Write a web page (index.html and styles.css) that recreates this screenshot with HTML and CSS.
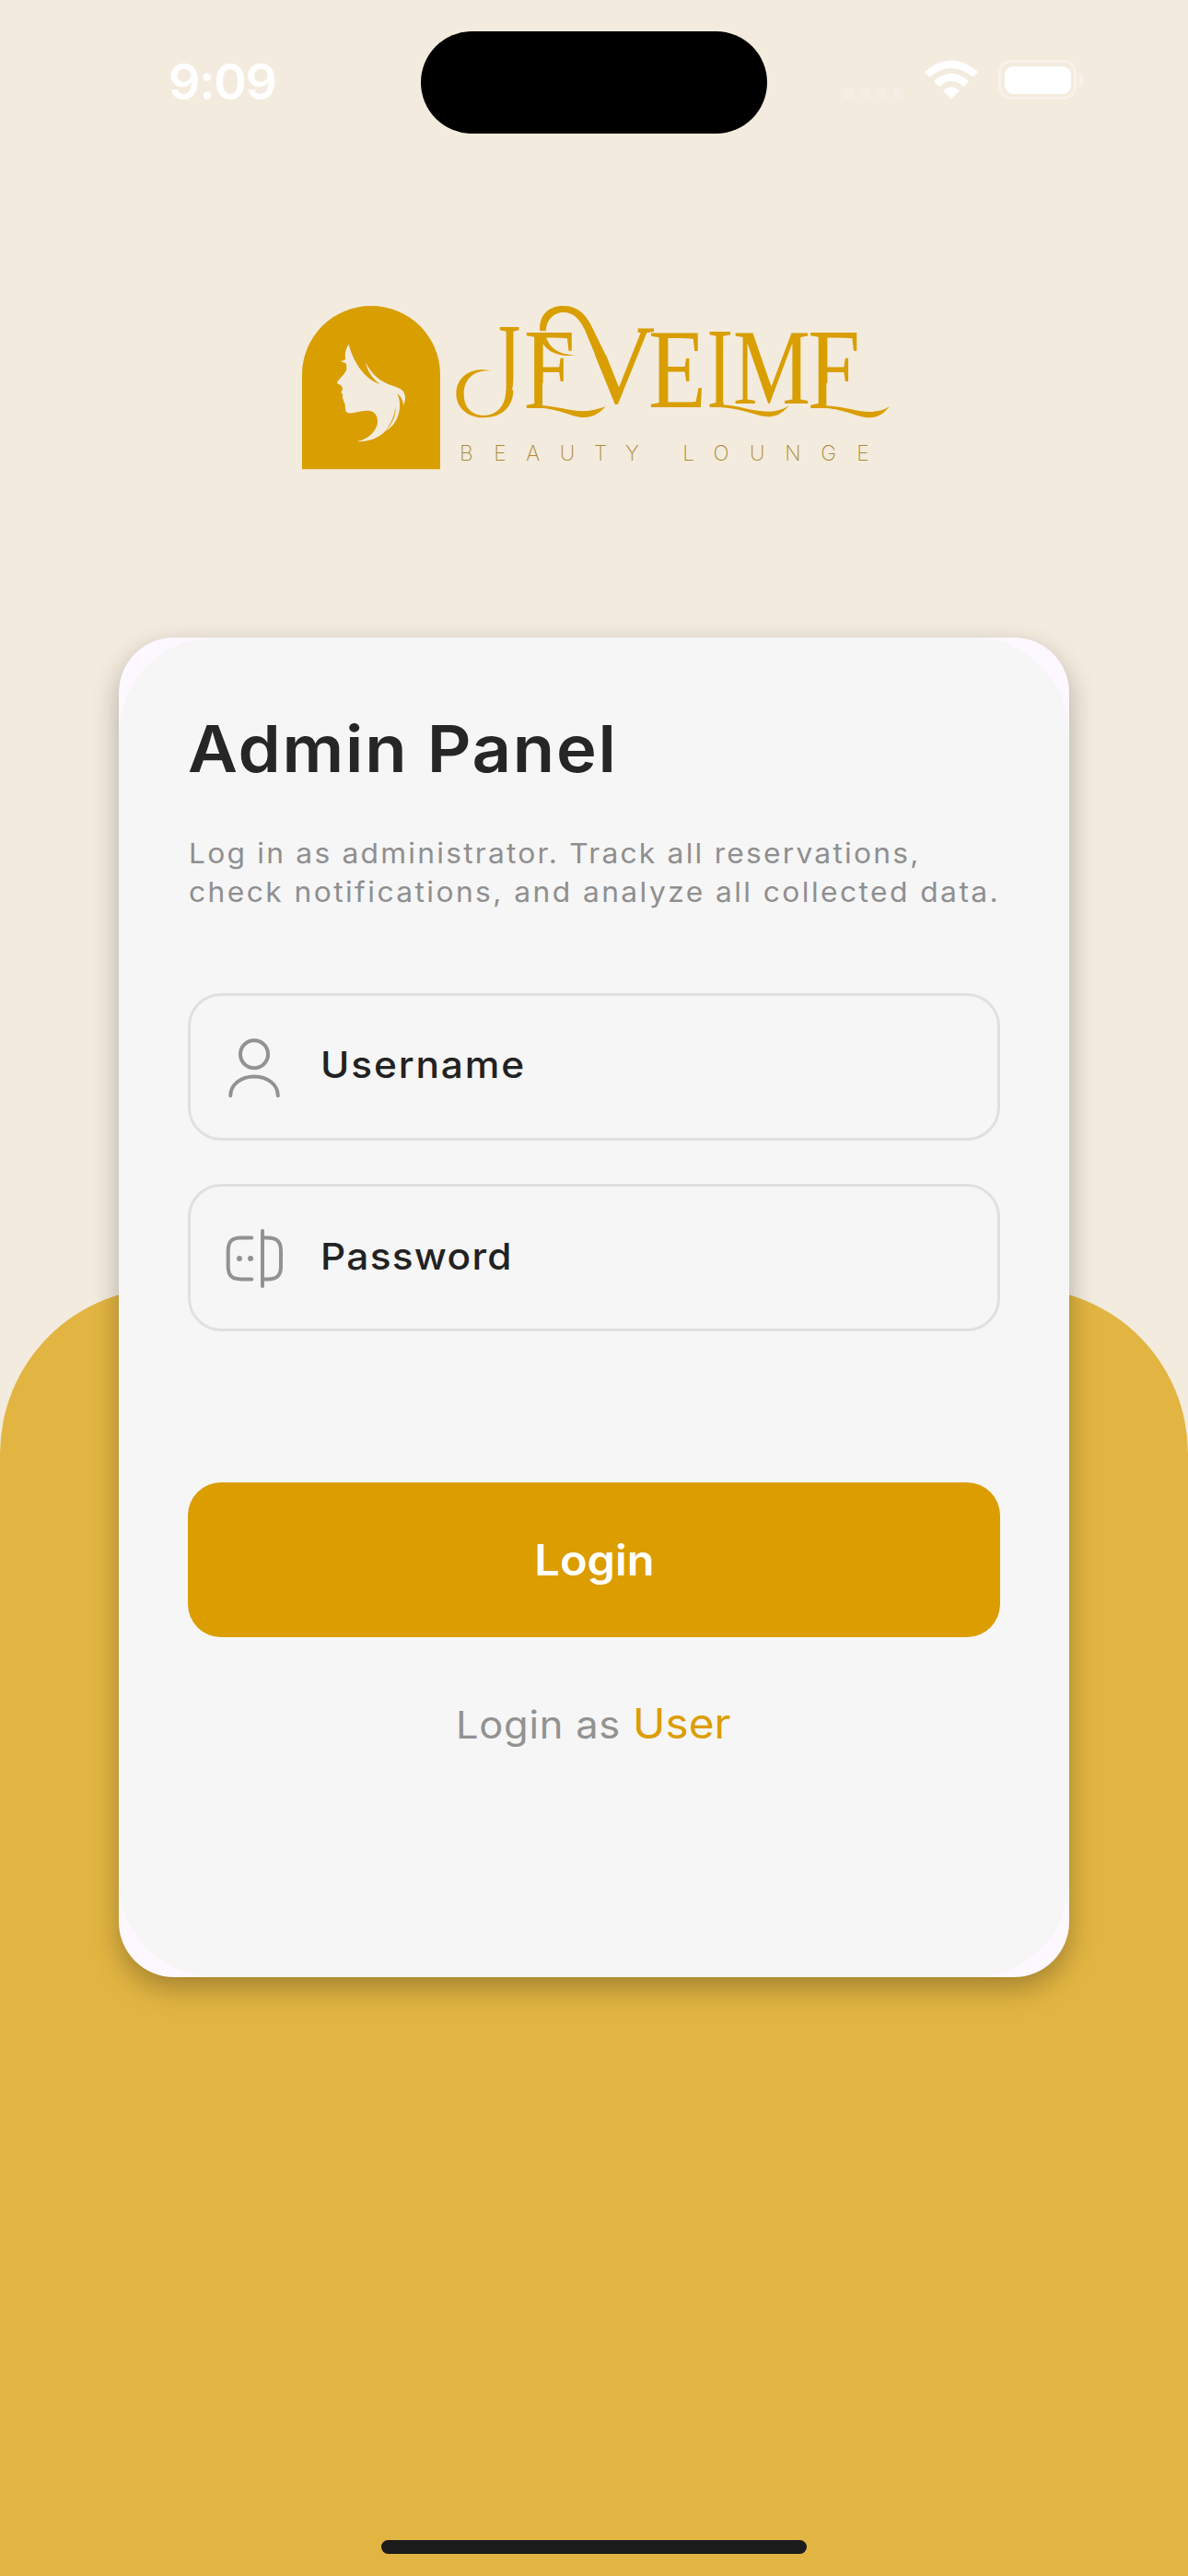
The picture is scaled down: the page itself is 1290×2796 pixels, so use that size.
FILE: index.html
```html
<!DOCTYPE html>
<html lang="en">
<head>
<meta charset="utf-8">
<title>Jevelme Beauty Lounge – Admin Panel</title>
<link rel="stylesheet" href="styles.css">
</head>
<body>
<div class="screen">
  <header class="status">
    <div class="time">9:09</div>
    <div class="island"></div>
    <div class="indicators">
      <div class="cell"><i></i><i></i><i></i><i></i></div>
      <svg class="wifi" viewBox="0 0 58 43">
        <path d="M0 13.300Q29-12.500 58 13.300L52.500 18.800Q29-1 5.500 18.800Z"/>
        <path d="M10 23.200Q29 6.500 48 23.200L42.400 29Q29 17 15.600 29Z"/>
        <path d="M20 33.500Q29 25.500 38 33.500L29 42.500Z"/>
      </svg>
      <div class="battery"><div class="charge"></div></div>
      <div class="nub"></div>
    </div>
  </header>

  <svg class="logo" viewBox="0 0 2010 660" role="img" aria-label="Jevelme Beauty Lounge">
    <defs>
      <clipPath id="clip-j"><path d="M680 100H770V200H745V341H712V200H680Z"/></clipPath>
      <clipPath id="clip-e1"><path d="M770 100H980V318H837V420H770Z"/></clipPath>
      <clipPath id="clip-v"><path d="M1148 100H1200V420H950V226H1060V162H1148Z"/></clipPath>
      <clipPath id="clip-l"><path d="M1370 100H1450V200H1427V420H1370Z"/></clipPath>
      <clipPath id="clip-e3"><path d="M1690 100H1900V318H1762V420H1690Z"/></clipPath>
    </defs>
    <g class="gold">
      <path d="M54 598V290A225 224 0 0 1 504 290V598Z"/>
      <g class="wordmark">
        <g clip-path="url(#clip-j)"><text transform="translate(670 381) scale(.66 1)">J</text></g>
        <g clip-path="url(#clip-e1)"><text transform="translate(777 398) scale(.8 1)">E</text></g>
        <g clip-path="url(#clip-v)"><text transform="translate(948 381) scale(.96 .98)">V</text></g>
        <text transform="translate(1182 395) scale(.83 .985)">E</text>
        <g clip-path="url(#clip-l)"><text transform="translate(1375 397) scale(.66 1)">L</text></g>
        <text transform="translate(1458 383) scale(.76 .935)">M</text>
        <g clip-path="url(#clip-e3)"><text transform="translate(1702 398) scale(.82 1)">E</text></g>
      </g>
      <path d="M742 340C742 395 705 430 645 430C590 430 556 395 556 352C556 300 600 262 670 277C620 272 581 300 581 352C581 395 605 423 645 423C690 423 718 390 718 340Z"/>
      <path d="M829 148C825 98 855 66 905 66C950 66 974 90 994 126L1044 228H1010L976 146C958 110 940 87 905 87C875 87 850 110 848 148Z"/>
      <path d="M831 163H848C856 200 890 228 947 226C890 236 835 212 831 163Z"/>
      <path d="M826 390C880 390 930 412 985 408C1010 404 1030 400 1043 393C1020 420 995 430 970 429C930 428 900 402 826 398Z"/>
      <path d="M1422 388C1480 390 1520 412 1580 410C1610 408 1625 400 1640 391C1615 420 1595 427 1572 427C1530 425 1490 400 1420 397Z"/>
      <path d="M1750 391C1810 391 1860 412 1910 411C1940 408 1955 402 1968 393C1945 422 1925 430 1900 430C1860 428 1820 400 1745 398Z"/>
    </g>
    <path class="face" d="M206 191C196 204 193 222 195 238C196 243 190 245 180 245C184 250 190 249 196 252C200 262 200 272 197 278C190 292 175 302 168 315C168 322 184 322 185 332C187 338 184 343 181 348C183 352 186 352 187 357C186 361 184 362 186 366C190 372 188 376 192 382C198 392 190 408 202 414C222 420 245 404 275 408C297 412 303 436 299 452C290 482 262 503 233 507C280 512 318 485 330 468C348 440 357 418 358 393C362 425 345 452 326 474C350 460 368 435 372 400C374 380 370 365 364 352C378 362 382 375 384 390C396 365 392 340 360 330C318 314 290 305 260 248C268 280 285 305 308 320C255 306 218 240 206 191Z"/>
    <text class="tagline" y="570" x="589 699 806 918 1026 1129 1203 1313 1419 1537 1653 1769 1881">BEAUTY LOUNGE</text>
  </svg>

  <main class="card">
    <div class="panel">
      <h1>Admin Panel</h1>
      <p class="intro"><span class="line1">Log in as administrator. Track all reservations,</span><br><span class="line2">check notifications, and analyze all collected data.</span></p>
      <div class="field">
        <svg class="icon" viewBox="0 0 72 72">
          <circle cx="36" cy="22.300" r="15"/>
          <path d="M10.300 67.200C10.300 55 22 46.500 36 46.500S61.800 55 61.800 67.200"/>
        </svg>
        <span class="label username">Username</span>
      </div>
      <div class="field">
        <svg class="icon" viewBox="0 0 72 72">
          <path d="M33.300 14.500H22C11.500 14.500 7.700 18.500 7.700 29V45C7.700 55.500 11.500 59.500 22 59.500H33.300M45 14.500H50.500C61 14.500 65 18.500 65 29V45C65 55.500 61 59.500 50.500 59.500H45M45 7V67"/>
          <circle class="dot" cx="20" cy="37" r="3"/>
          <circle class="dot" cx="32" cy="37" r="3"/>
        </svg>
        <span class="label password">Password</span>
      </div>
      <button class="login" type="button"><span>Login</span></button>
      <p class="switch"><span class="as">Login as</span><a class="user">User</a></p>
    </div>
  </main>
  <div class="home"></div>
</div>
</body>
</html>
```
FILE: styles.css
```css
* { box-sizing: border-box; margin: 0; padding: 0; }

body {
  font-family: Inter, "Open Sans", sans-serif;
  background: #f3ebde;
}

.screen {
  position: relative;
  isolation: isolate;
  width: 1290px;
  height: 2796px;
  display: flex;
  flex-direction: column;
  align-items: center;
  overflow: hidden;
}

.screen::before {
  content: "";
  position: absolute;
  z-index: -1;
  inset: 1398px 0 0;
  background: #e2b542;
  border-radius: 180px 180px 0 0;
}

/* Status bar */
.status {
  width: 100%;
  height: 177px;
  flex: none;
  padding: 33.500px 113px 32px 183px;
  display: grid;
  grid-template-columns: 274px 376px 1fr;
}

.time {
  color: #fff;
  font-size: 54px;
  font-weight: 600;
  line-height: 110px;
  letter-spacing: -1.300px;
}

.island {
  height: 111px;
  border-radius: 56px;
  background: #000;
}

.indicators {
  display: flex;
  justify-content: flex-end;
  padding-top: 31.500px;
}

.cell { display: flex; gap: 7px; padding-top: 31px; margin-right: 23px; }
.cell i { width: 11px; height: 11px; border-radius: 4px; background: #f5eee5; }

.wifi { width: 58px; height: 43px; fill: #fff; margin-right: 22px; }

.battery {
  width: 85px;
  height: 43px;
  border: 3.500px solid #f7f2ea;
  border-radius: 14px;
  padding: 3.500px;
}
.charge { height: 100%; border-radius: 9px; background: #fff; }
.nub { width: 5px; height: 13px; margin: 15px 0 0 3px; border-radius: 0 5px 5px 0; background: #f7f2ea; }

/* Logo */
.logo {
  width: 670px;
  height: 220px;
  flex: none;
  margin-top: 133px;
  display: block;
}
.gold { fill: #d99e00; }
.face { fill: #f3ebde; }
.wordmark { font: 373px "Liberation Serif", serif; }
.tagline {
  font: 200 68px Inter, sans-serif;
  fill: #a98a35;
  text-anchor: middle;
}

/* Card */
.card {
  width: 1032px;
  height: 1454px;
  flex: none;
  margin-top: 161.500px;
  border-radius: 60px;
  background: #fdf7ff;
  box-shadow: 0 12px 30px rgba(0, 0, 0, .28);
}

.panel {
  height: 100%;
  padding: 79.500px 75px 0;
  border-radius: 105px;
  background: #f6f6f6;
  display: flex;
  flex-direction: column;
}

/* Text is set slightly wide */
h1, .line1, .line2, .label, .login span, .as, .user {
  display: inline-block;
  transform: scaleX(1.06);
  transform-origin: left center;
  white-space: nowrap;
}

h1 {
  color: #262626;
  font-size: 70px;
  font-weight: 600;
  line-height: 84px;
  letter-spacing: 1.600px;
}

.intro {
  margin: 49.500px 0 0 1px;
  color: #8f8f8f;
  font-size: 30px;
  font-weight: 400;
  line-height: 42px;
}
.line1 { letter-spacing: 2.080px; }
.line2 { letter-spacing: 2.270px; }

.field {
  height: 160px;
  flex: none;
  border: 3px solid #e0e0e0;
  border-radius: 36px;
  padding-left: 33px;
  display: flex;
  align-items: center;
  gap: 36px;
  color: #222;
  font-size: 40px;
  font-weight: 500;
}
.intro + .field { margin-top: 89px; }
.field + .field { margin-top: 47.500px; }
.label { padding-bottom: 4px; }
.username { letter-spacing: 1.750px; }
.password { letter-spacing: 1.200px; }

.icon {
  width: 72px;
  height: 72px;
  fill: none;
  stroke: #929292;
  stroke-width: 4;
  stroke-linecap: round;
  stroke-linejoin: round;
}
.icon .dot { fill: #929292; stroke: none; }

.login {
  height: 168.500px;
  flex: none;
  margin-top: 163.500px;
  border: 0;
  border-radius: 36px;
  background: #db9d00;
  color: #fff;
  font: 600 46px Inter, sans-serif;
}
.login span { transform-origin: center; }

.switch {
  margin: 64px 8px 0 0;
  display: flex;
  justify-content: center;
  align-items: baseline;
  gap: 23px;
  line-height: 60px;
}
.as { color: #929292; font-size: 41px; font-weight: 400; letter-spacing: .7px; }
.user { color: #db9d00; font-size: 45px; font-weight: 400; }

.home {
  width: 462px;
  height: 15px;
  flex: none;
  margin: auto 0 24px;
  border-radius: 8px;
  background: #1b1b1b;
}
```
